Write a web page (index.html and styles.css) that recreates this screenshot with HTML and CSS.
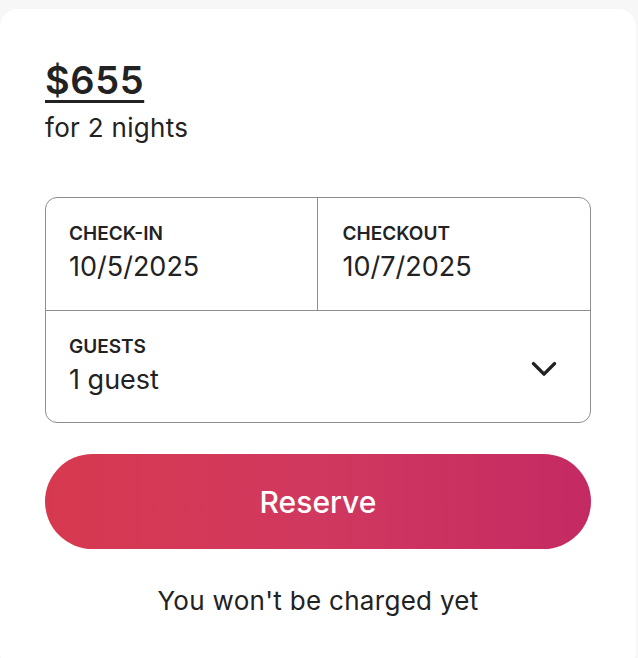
FILE: index.html
```html
<!DOCTYPE html>
<html lang="en">
<head>
<meta charset="UTF-8" />
<meta name="viewport" content="width=device-width,initial-scale=1" />
<title>Reserve</title>
<link rel="stylesheet" href="styles.css">
</head>
<body>
<div class="card">
    <div class="price-block">
        <a class="price" href="#">$655</a>
        <div class="nights">for 2 nights</div>
    </div>

    <div class="picker">
        <div class="dates">
            <div class="field">
                <div class="field-label">CHECK-IN</div>
                <div class="field-value">10/5/2025</div>
            </div>
            <div class="field field-right">
                <div class="field-label">CHECKOUT</div>
                <div class="field-value">10/7/2025</div>
            </div>
        </div>
        <div class="field guests">
            <div>
                <div class="field-label">GUESTS</div>
                <div class="field-value">1 guest</div>
            </div>
            <!-- 下拉箭头 -->
            <svg class="chevron" viewBox="0 0 32 32" width="28" height="28" aria-hidden="true">
                <path d="M4 11 L16 23 L28 11" fill="none" stroke="#222" stroke-width="4" stroke-linecap="round" stroke-linejoin="round"/>
            </svg>
        </div>
    </div>

    <button class="reserve-btn">Reserve</button>

    <p class="note">You won't be charged yet</p>
</div>
</body>
</html>
```

FILE: styles.css
```css
*{margin:0;padding:0;box-sizing:border-box}
body{
    background:#f7f7f7;
    font-family:Inter,'Noto Sans',Arial,sans-serif;
    color:#222;
}
.card{
    width:636px;
    height:660px;
    margin-top:9px;
    background:#fff;
    border-radius:18px;
    padding:47px 45px 0;
}
.price-block{
    margin-bottom:53px;
}
.price{
    display:inline-block;
    font-size:38px;
    font-weight:600;
    line-height:48px;
    letter-spacing:0.6px;
    color:#222;
    text-decoration:underline;
    text-decoration-thickness:3px;
    text-underline-offset:6px;
}
.nights{
    font-size:26px;
    line-height:32px;
    letter-spacing:0.3px;
    margin-top:8px;
}
.picker{
    border:1.5px solid #8e8e8e;
    border-radius:12px;
}
.dates{
    display:flex;
    border-bottom:1.5px solid #8e8e8e;
}
.dates .field{
    flex:1;
    height:112px;
}
.field{
    padding:24px 23px 0;
}
.field-right{
    border-left:1.5px solid #8e8e8e;
    padding-left:25px;
}
.field-label{
    font-size:19px;
    font-weight:600;
    line-height:24px;
}
.field-value{
    font-size:27px;
    line-height:34px;
    margin-top:4px;
}
.guests{
    display:flex;
    justify-content:space-between;
    align-items:flex-start;
    height:111px;
    padding-right:32px;
}
.chevron{
    display:block;
    margin-top:19px;
}
.reserve-btn{
    display:block;
    width:100%;
    height:95px;
    margin-top:31px;
    border:none;
    border-radius:48px;
    background:linear-gradient(to right,#d6394f,#d1385f 50%,#c42a62);
    color:#fff;
    font-family:inherit;
    font-size:30px;
    font-weight:500;
    cursor:pointer;
}
.note{
    margin-top:36px;
    text-align:center;
    font-size:26px;
    line-height:32px;
    letter-spacing:0.3px;
}
```
